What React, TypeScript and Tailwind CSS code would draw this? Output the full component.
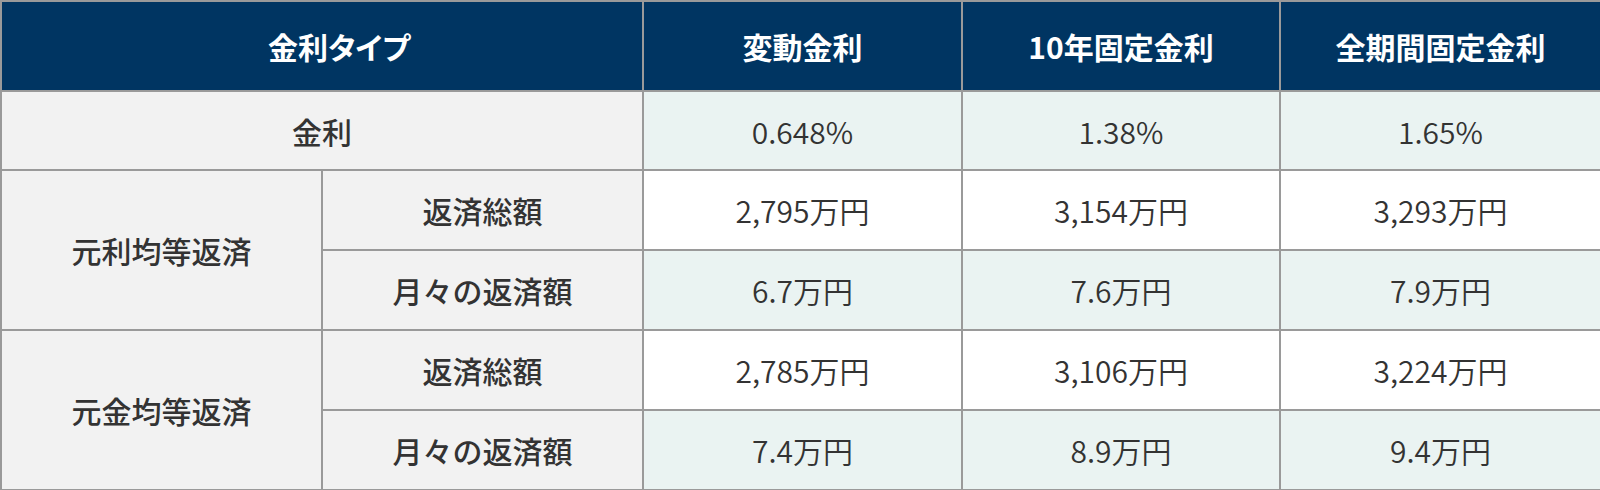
import React from 'react';

type Row = {
  label: string;
  values: string[];
  shaded: boolean;
};

const rates = ['0.648%', '1.38%', '1.65%'];

const groups: { name: string; rows: Row[] }[] = [
  {
    name: '元利均等返済',
    rows: [
      { label: '返済総額', values: ['2,795万円', '3,154万円', '3,293万円'], shaded: false },
      { label: '月々の返済額', values: ['6.7万円', '7.6万円', '7.9万円'], shaded: true },
    ],
  },
  {
    name: '元金均等返済',
    rows: [
      { label: '返済総額', values: ['2,785万円', '3,106万円', '3,224万円'], shaded: false },
      { label: '月々の返済額', values: ['7.4万円', '8.9万円', '9.4万円'], shaded: true },
    ],
  },
];

const cell = 'border-2 border-[#9a9a9a] text-center align-middle p-0';
const label = `${cell} bg-[#f2f2f2] font-medium text-[#333333]`;
const value = `${cell} font-[350] text-[#333333]`;
const head = `${cell} bg-[#003562] text-white font-bold`;

const App: React.FC = () => {
  return (
    <div className="w-[1600px] h-[490px] bg-white font-['Noto_Sans_CJK_JP','Noto_Sans',sans-serif] text-[30px] leading-none">
      <table className="w-full table-fixed border-collapse">
        <colgroup>
          <col className="w-[321px]" />
          <col className="w-[321px]" />
          <col className="w-[319px]" />
          <col className="w-[318px]" />
          <col className="w-[321px]" />
        </colgroup>
        <thead>
          <tr className="h-[90px]">
            <th colSpan={2} className={`${head} pl-[34px] [font-feature-settings:'palt']`}>金利タイプ</th>
            <th className={head}>変動金利</th>
            <th className={head}>10年固定金利</th>
            <th className={head}>全期間固定金利</th>
          </tr>
        </thead>
        <tbody>
          <tr className="h-[79px]">
            <td colSpan={2} className={label}>金利</td>
            {rates.map((r) => (
              <td key={r} className={`${value} bg-[#eaf3f2]`}>{r}</td>
            ))}
          </tr>
          {groups.map((g) =>
            g.rows.map((row, i) => (
              <tr key={g.name + row.label} className="h-[80px]">
                {i === 0 && (
                  <td rowSpan={2} className={label}>{g.name}</td>
                )}
                <td className={label}>{row.label}</td>
                {row.values.map((v, j) => (
                  <td key={j} className={`${value} ${row.shaded ? 'bg-[#eaf3f2]' : 'bg-white'}`}>{v}</td>
                ))}
              </tr>
            ))
          )}
        </tbody>
      </table>
    </div>
  );
};

export default App;
